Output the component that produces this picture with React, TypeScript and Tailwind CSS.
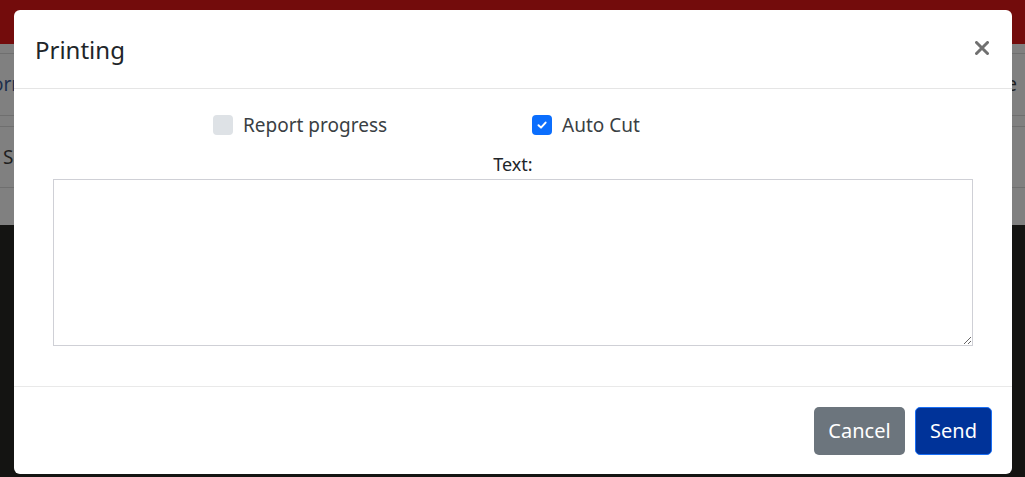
import React from "react"

export default function App() {
  return (
    <div
      className="relative w-[1025px] h-[477px] overflow-hidden bg-[#141412]"
      style={{ fontFamily: '"Noto Sans", "Open Sans", sans-serif' }}
    >
      {/* dimmed page behind the dialog */}
      <div className="flex flex-col">
        <div className="h-[44px] bg-[#730c0c]" />
        <div className="h-[181px] bg-[#808080] flex flex-col">
          <div className="h-[10px] border-b border-[#6f6f6f]" />
          <div className="h-[62px] border-b border-[#6f6f6f] flex items-center justify-between text-[19px] text-[#1d2f4d]">
            <span className="-ml-[8px]">orrect</span>
            <span className="mr-[8px] text-[#1f1f1f]">File</span>
          </div>
          <div className="h-[11px] border-b border-[#6f6f6f]" />
          <div className="h-[61px] border-b border-[#6f6f6f] flex items-center text-[19px] text-[#1f1f1f]">
            <span className="ml-[3px]">Save</span>
          </div>
        </div>
      </div>

      {/* dialog */}
      <div className="absolute left-[14px] top-[10px] w-[998px] h-[464px] bg-white rounded-[6px] flex flex-col text-[#212529]">
        <div className="h-[79px] border-b border-[#e5e5e5] flex items-center justify-between pl-[21px] pr-[23px]">
          <h2 className="text-[24px] leading-none pt-[2px]">Printing</h2>
          <svg width="14" height="14" viewBox="0 0 14 14" className="mt-[-3px]">
            <path d="M1.5 1.5 L12.5 12.5 M12.5 1.5 L1.5 12.5" stroke="#707070" strokeWidth="3" strokeLinecap="round" />
          </svg>
        </div>

        <div className="h-[298px] border-b border-[#e9e9e9] px-[39px] pt-[22px] flex flex-col">
          <div className="flex items-center pl-[160px] text-[19px] text-[#3a3f44]">
            <label className="w-[319px] flex items-center gap-[10px]">
              <span className="w-[20px] h-[20px] rounded-[4px] bg-[#dee2e6]" />
              <span>Report progress</span>
            </label>
            <label className="flex items-center gap-[10px]">
              <span className="w-[20px] h-[20px] rounded-[4px] bg-[#0b6efd] flex items-center justify-center">
                <svg width="12" height="12" viewBox="0 0 12 12">
                  <path d="M2.5 6.2 L5 8.6 L9.6 3.6" stroke="white" strokeWidth="2" fill="none" strokeLinecap="round" strokeLinejoin="round" />
                </svg>
              </span>
              <span>Auto Cut</span>
            </label>
          </div>
          <div className="text-center text-[18px] mt-[12px] leading-[24px]">Text:</div>
          <textarea className="mt-[3px] w-[920px] h-[167px] border border-[#cfd0d6] outline-none" />
        </div>

        <div className="flex-1 flex items-start justify-end gap-[10px] pr-[20px] pt-[20px]">
          <button className="h-[48px] w-[91px] rounded-[5px] bg-[#6c757d] text-white text-[20px]">Cancel</button>
          <button className="h-[48px] w-[77px] rounded-[5px] bg-[#003399] border border-[#1a6ff5] text-white text-[20px]">Send</button>
        </div>
      </div>
    </div>
  )
}
